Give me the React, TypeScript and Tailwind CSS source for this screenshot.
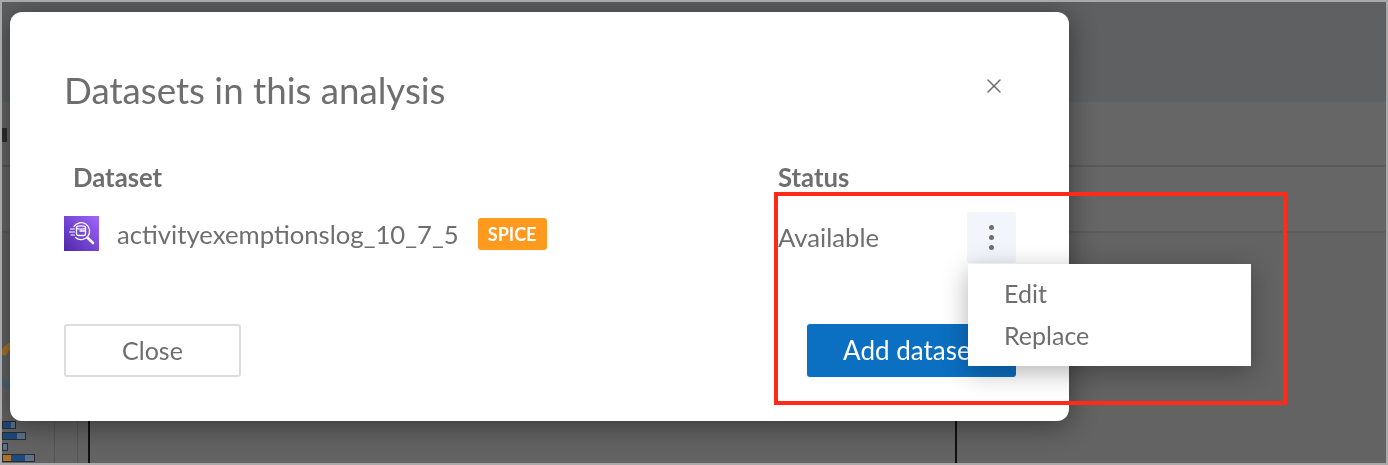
import { X } from "lucide-react";

// Purple dataset tile with the magnifier glyph
function DatasetIcon() {
  return (
    <svg width="35" height="35" viewBox="0 0 35 35" className="shrink-0">
      <defs>
        <linearGradient id="tile" x1="0" y1="1" x2="1" y2="0">
          <stop offset="0" stopColor="#4d27a8" />
          <stop offset="1" stopColor="#a166ff" />
        </linearGradient>
      </defs>
      <rect width="35" height="35" fill="url(#tile)" />
      <g fill="none" stroke="#fff" strokeWidth="1.3" strokeLinecap="round" strokeLinejoin="round">
        <path d="M10 10.5 a8.5 8.5 0 1 1 1.5 11" />
        <path d="M23.8 22 L29 27" strokeWidth="2.6" />
        <ellipse cx="17" cy="11.5" rx="4.5" ry="1.6" />
        <path d="M12.5 11.5 v6 a2 2 0 0 0 2 2 h5 a2 2 0 0 0 2 -2 v-6" />
        <path d="M16 15 h5" />
        <path d="M6.5 13 h4 M5.5 16 h5 M7 19 h3.5" strokeWidth="1.1" />
      </g>
    </svg>
  );
}

// The dimmed analysis page behind the modal
function Backdrop() {
  return (
    <div className="flex h-full flex-col">
      <div className="h-[100px] bg-[#5f6062]" />
      <div className="h-[65px] border-b-2 border-[#5a5a5a] bg-[#666666]" />
      <div className="h-[66px] border-b-2 border-[#5d5d5d] bg-[#666666]" />
      <div className="flex-1 bg-[#636363]" />
    </div>
  );
}

function ChartBar({ orange, blue, pale }: { orange: string; blue: string; pale: string }) {
  return (
    <div className="flex h-[8px] w-fit border border-[#2c2c2c]">
      <div className={`${orange} bg-[#a8742a]`} />
      <div className={`${blue} bg-[#1d4a80]`} />
      <div className={`${pale} bg-[#5b7389]`} />
    </div>
  );
}

export default function App() {
  return (
    <div className="relative h-[465px] w-[1388px] overflow-hidden border-2 border-[#a9a9a9] font-['Lato',sans-serif] blur-[0.5px]">
      <Backdrop />

      {/* chart scraps showing under the modal */}
      <svg width="10" height="50" viewBox="0 0 10 50" className="absolute left-0 top-[341px]">
        <path d="M9 2 A18 18 0 0 0 1 12" fill="none" stroke="#a8742a" strokeWidth="6" />
        <path d="M1 14 A18 18 0 0 0 9 44" fill="none" stroke="#4d6478" strokeWidth="6" />
      </svg>
      <div className="absolute left-0 top-[419px] flex w-[40px] flex-col gap-[3px]">
        <ChartBar orange="w-0" blue="w-[8px]" pale="w-[4px]" />
        <ChartBar orange="w-0" blue="w-[14px]" pale="w-[8px]" />
        <ChartBar orange="w-0" blue="w-0" pale="w-[4px]" />
        <ChartBar orange="w-[8px]" blue="w-[14px]" pale="w-[9px]" />
      </div>
      <div className="absolute left-0 top-[126px] h-[14px] w-[5px] bg-[#2e2e2e]" />
      <div className="absolute left-[52px] top-[415px] h-[50px] w-px bg-[#555555]" />
      <div className="absolute left-[75px] top-[415px] h-[50px] w-px bg-[#555555]" />
      <div className="absolute left-[86px] top-[415px] h-[50px] w-[2px] bg-[#111111]" />
      <div className="absolute left-[953px] top-[415px] h-[50px] w-[2px] bg-[#111111]" />

      {/* modal */}
      <div className="absolute left-[8px] top-[10px] flex h-[409px] w-[1059px] flex-col rounded-[12px] bg-white pb-[44px] pl-[54px] pr-[53px] pt-[56px] text-[#6e6e6e] shadow-[0_4px_28px_rgba(0,0,0,0.45)]">
        <div className="flex items-center justify-between">
          <h1 className="text-[36.7px] font-normal leading-[44px]">Datasets in this analysis</h1>
          <X size={24} strokeWidth={1.5} className="mr-[10px] mt-[-8px]" />
        </div>

        <div className="mt-[49px] grid grid-cols-[714px_1fr] text-[25.7px] leading-[32px]">
          <div className="pl-[9px] font-bold">Dataset</div>
          <div className="font-bold">Status</div>
          <div className="mt-[23px] flex items-center self-start">
            <DatasetIcon />
            <span className="ml-[18px]">activityexemptionslog_10_7_5</span>
            <span className="ml-[19px] flex h-[32px] w-[69px] items-center justify-center rounded-[3px] bg-[#ff9a1f] text-[18px] font-bold text-white">
              SPICE
            </span>
          </div>
          <div className="mt-[19px] flex items-start justify-between">
            <span className="mt-[9px]">Available</span>
            <div className="flex h-[51px] w-[49px] flex-col items-center justify-center gap-[5px] rounded-[3px] bg-[#f2f5fc]">
              <span className="h-[5px] w-[5px] rounded-full bg-[#6e6e6e]" />
              <span className="h-[5px] w-[5px] rounded-full bg-[#6e6e6e]" />
              <span className="h-[5px] w-[5px] rounded-full bg-[#6e6e6e]" />
            </div>
          </div>
        </div>

        <div className="mt-auto flex items-start justify-between">
          <button
            type="button"
            className="h-[53px] w-[177px] rounded-[3px] border-2 border-[#dddddd] bg-white text-[25px]"
          >
            Close
          </button>
          <button
            type="button"
            className="h-[53px] w-[209px] rounded-[3px] bg-[#0b6fc2] text-[26px] text-white"
          >
            Add dataset
          </button>
        </div>
      </div>

      {/* kebab menu */}
      <div className="absolute left-[966px] top-[262px] flex h-[102px] w-[283px] flex-col justify-center gap-[10px] bg-white pb-[2px] pl-[36px] text-[25px] leading-[32px] text-[#6e6e6e] shadow-[0_6px_24px_rgba(0,0,0,0.3)]">
        <div>Edit</div>
        <div>Replace</div>
      </div>

      {/* annotation */}
      <div className="absolute left-[772px] top-[190px] h-[213px] w-[513px] border-4 border-[#ff2a17]" />
    </div>
  );
}
